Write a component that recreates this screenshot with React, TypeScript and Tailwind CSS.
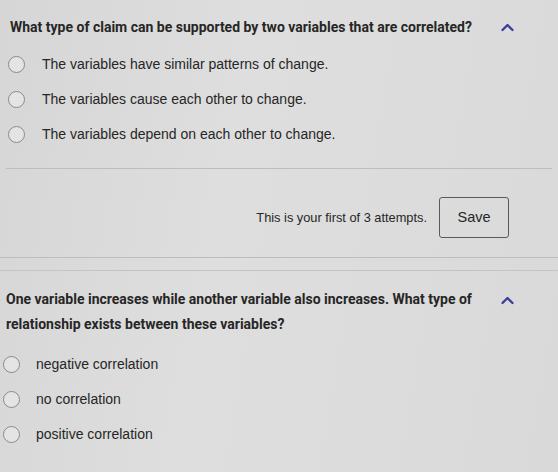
import React from "react";

function Radio() {
  return <span className="inline-block w-[17px] h-[17px] rounded-full border-[1.5px] border-[#8a8a8a] bg-[#e4e4e4] shrink-0" />;
}

function Chevron() {
  return (
    <svg width="15" height="10" viewBox="0 0 15 10" className="shrink-0">
      <path d="M2.5 8 L7.5 3 L12.5 8" fill="none" stroke="#3c3c9a" strokeWidth="2.3" strokeLinecap="round" strokeLinejoin="round" />
    </svg>
  );
}

const titleFont = { fontFamily: 'Roboto, "Liberation Sans", Arial, sans-serif' };

export default function App() {
  const opts1 = [
    "The variables have similar patterns of change.",
    "The variables cause each other to change.",
    "The variables depend on each other to change.",
  ];
  const opts2 = ["negative correlation", "no correlation", "positive correlation"];
  return (
    <div
      className="w-[558px] h-[472px] overflow-hidden bg-[linear-gradient(100deg,#d6d6d6_0%,#dedede_40%,#dcdcdc_70%,#d9d9d9_100%)] text-[#262626]"
      style={{ fontFamily: '"Liberation Sans", Arial, sans-serif' }}
    >
      <div className="flex items-center pl-[10px] pt-[18px]">
        <div className="text-[14px] font-bold leading-[18px] w-[490px]" style={titleFont}>What type of claim can be supported by two variables that are correlated?</div>
        <Chevron />
      </div>
      <div className="flex flex-col gap-[17px] pl-[8px] pt-[19px]">
        {opts1.map((o) => (
          <div key={o} className="flex items-center gap-[17px]">
            <Radio />
            <span className="text-[14px] leading-[18px]">{o}</span>
          </div>
        ))}
      </div>
      <div className="mt-[25px] mx-[6px] h-px bg-[#bdbdbd]" />
      <div className="flex items-center justify-end gap-[12px] pr-[49px] pt-[28px]">
        <span className="text-[12.8px]">This is your first of 3 attempts.</span>
        <div className="w-[70px] h-[41px] border-[1.5px] border-[#5a5a5a] rounded-[3px] flex items-center justify-center text-[14.5px]">Save</div>
      </div>
      <div className="mt-[19px] h-px bg-[#bdbdbd]" />
      <div className="mt-[12px] h-px bg-[#c4c4c4]" />
      <div className="flex items-start pl-[6px] pt-[16px]">
        <div className="text-[14px] font-bold leading-[25px] w-[494px]" style={titleFont}>
          One variable increases while another variable also increases. What type of relationship exists between these variables?
        </div>
        <div className="pt-[8px]"><Chevron /></div>
      </div>
      <div className="flex flex-col gap-[17px] pl-[3px] pt-[18px]">
        {opts2.map((o) => (
          <div key={o} className="flex items-center gap-[16px]">
            <Radio />
            <span className="text-[14px] leading-[18px]">{o}</span>
          </div>
        ))}
      </div>
    </div>
  );
}
